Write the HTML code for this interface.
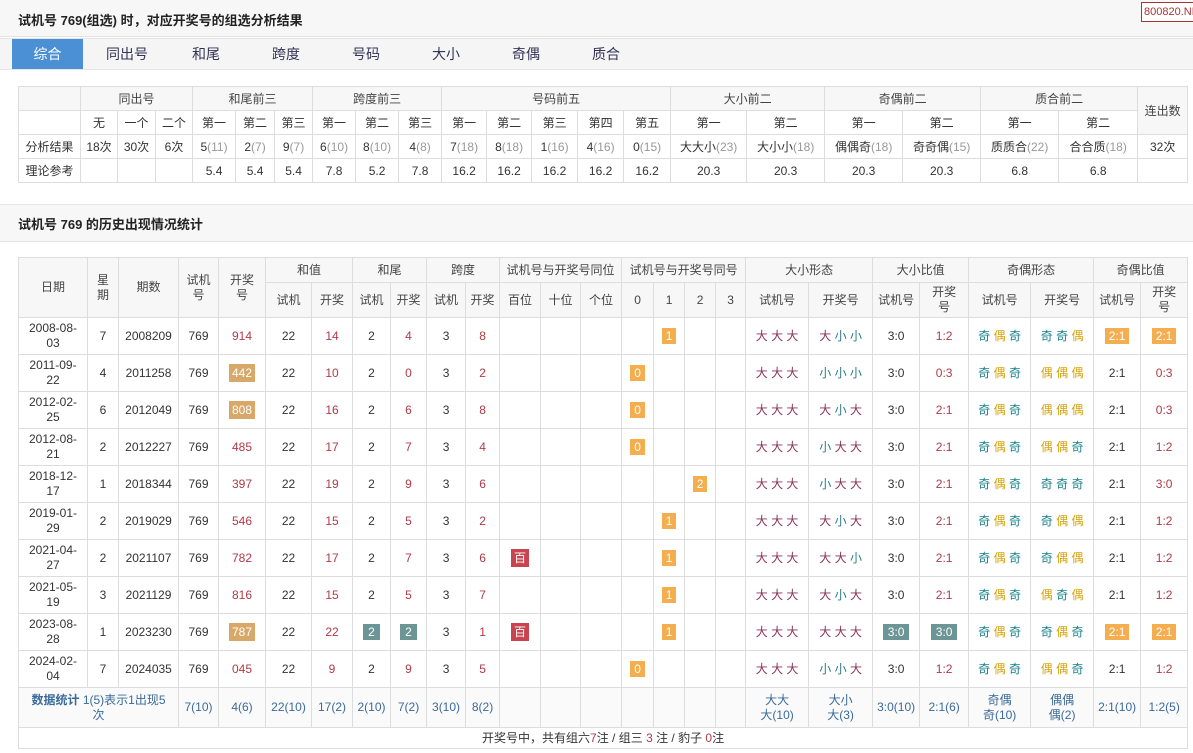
<!DOCTYPE html><html><head><meta charset="utf-8"><style>
body{margin:0;background:#fff;font-family:"Liberation Sans","Noto Sans CJK SC",sans-serif;font-size:12px;color:#333;width:1193px;height:753px;overflow:hidden;position:relative}
.bar{position:absolute;left:0;width:1193px;background:#f7f7f7;border-bottom:1px solid #e3e3e3}
.t{position:absolute;left:18px;font-weight:bold;font-size:13px;color:#222}
.logo{position:absolute;left:1141px;top:2px;border:1px solid #a33;color:#a33;font-size:11px;padding:0 2px;background:#fff;height:18px;line-height:18px;white-space:nowrap}
.tabs{position:absolute;top:38px;left:0;width:1193px;height:30px;background:#f5f5f5;border-top:1px solid #e5e5e5;border-bottom:1px solid #e5e5e5}
.tab{position:absolute;top:0;height:30px;line-height:30px;font-size:14px;color:#335;text-align:center;width:70px}
.tab.a{background:#4b8fd5;color:#fff;left:12px;width:71px}
table{border-collapse:collapse;table-layout:fixed;position:absolute;left:18px}
td{border:1px solid #ddd;text-align:center;padding:0;overflow:hidden;white-space:nowrap}
.h td{background:#f7f7f7;color:#444}
.g{color:#999}
.r{color:#b03a48}
.d{color:#8b3358}.x{color:#2c7b88}.j{color:#16808a}.o{color:#d6a30e}
.b{display:inline-block;background:#f4ad4f;color:#fff;padding:0 4px;line-height:16px}
.tan{display:inline-block;background:#d8a868;color:#fff;padding:0 3px;line-height:18px}
.tl{display:inline-block;background:#6c9696;color:#fff;padding:0 5px;line-height:16px}
.rb{display:inline-block;background:#c8454f;color:#fff;padding:0 3px;line-height:18px}
#t2 td{white-space:normal;line-height:15px}
.st td{color:#3a6a9a}
</style></head><body>
<div class="bar" style="top:0;height:36px"></div>
<div class="t" style="top:10px">试机号 769(组选) 时，对应开奖号的组选分析结果</div>
<div class="logo">800820.NET</div>
<div class="tabs">
<div class="tab a">综合</div><div class="tab" style="left:92px">同出号</div><div class="tab" style="left:171px">和尾</div><div class="tab" style="left:251px">跨度</div><div class="tab" style="left:331px">号码</div><div class="tab" style="left:411px">大小</div><div class="tab" style="left:491px">奇偶</div><div class="tab" style="left:571px">质合</div>
</div>
<table style="top:86px;width:1169px">
<colgroup><col style="width:62px"><col style="width:37px"><col style="width:38px"><col style="width:37px"><col style="width:43px"><col style="width:39px"><col style="width:38px"><col style="width:43px"><col style="width:43px"><col style="width:43px"><col style="width:45px"><col style="width:45px"><col style="width:46px"><col style="width:46px"><col style="width:47px"><col style="width:76px"><col style="width:78px"><col style="width:78px"><col style="width:78px"><col style="width:78px"><col style="width:79px"><col style="width:50px"></colgroup>
<tr class="h" style="height:24px"><td></td><td colspan="3">同出号</td><td colspan="3">和尾前三</td><td colspan="3">跨度前三</td><td colspan="5">号码前五</td><td colspan="2">大小前二</td><td colspan="2">奇偶前二</td><td colspan="2">质合前二</td><td rowspan="2">连出数</td></tr>
<tr style="height:24px"><td></td><td>无</td><td>一个</td><td>二个</td><td>第一</td><td>第二</td><td>第三</td><td>第一</td><td>第二</td><td>第三</td><td>第一</td><td>第二</td><td>第三</td><td>第四</td><td>第五</td><td>第一</td><td>第二</td><td>第一</td><td>第二</td><td>第一</td><td>第二</td></tr>
<tr style="height:24px"><td>分析结果</td><td>18次</td><td>30次</td><td>6次</td><td>5<span class="g">(11)</span></td><td>2<span class="g">(7)</span></td><td>9<span class="g">(7)</span></td><td>6<span class="g">(10)</span></td><td>8<span class="g">(10)</span></td><td>4<span class="g">(8)</span></td><td>7<span class="g">(18)</span></td><td>8<span class="g">(18)</span></td><td>1<span class="g">(16)</span></td><td>4<span class="g">(16)</span></td><td>0<span class="g">(15)</span></td><td>大大小<span class="g">(23)</span></td><td>大小小<span class="g">(18)</span></td><td>偶偶奇<span class="g">(18)</span></td><td>奇奇偶<span class="g">(15)</span></td><td>质质合<span class="g">(22)</span></td><td>合合质<span class="g">(18)</span></td><td>32次</td></tr>
<tr style="height:24px"><td>理论参考</td><td></td><td></td><td></td><td>5.4</td><td>5.4</td><td>5.4</td><td>7.8</td><td>5.2</td><td>7.8</td><td>16.2</td><td>16.2</td><td>16.2</td><td>16.2</td><td>16.2</td><td>20.3</td><td>20.3</td><td>20.3</td><td>20.3</td><td>6.8</td><td>6.8</td><td></td></tr>
</table>
<div class="bar" style="top:204px;height:36px;border-top:1px solid #e3e3e3"></div>
<div class="t" style="top:214px">试机号 769 的历史出现情况统计</div>
<table id="t2" style="top:257px;width:1169px">
<colgroup><col style="width:69px"><col style="width:31px"><col style="width:60px"><col style="width:40px"><col style="width:47px"><col style="width:46px"><col style="width:41px"><col style="width:38px"><col style="width:36px"><col style="width:39px"><col style="width:34px"><col style="width:41px"><col style="width:40px"><col style="width:41px"><col style="width:32px"><col style="width:31px"><col style="width:31px"><col style="width:30px"><col style="width:63px"><col style="width:64px"><col style="width:47px"><col style="width:49px"><col style="width:62px"><col style="width:63px"><col style="width:47px"><col style="width:47px"></colgroup>
<tr class="h" style="height:25px"><td rowspan="2">日期</td><td rowspan="2">星<br>期</td><td rowspan="2">期数</td><td rowspan="2">试机<br>号</td><td rowspan="2">开奖<br>号</td><td colspan="2">和值</td><td colspan="2">和尾</td><td colspan="2">跨度</td><td colspan="3">试机号与开奖号同位</td><td colspan="4">试机号与开奖号同号</td><td colspan="2">大小形态</td><td colspan="2">大小比值</td><td colspan="2">奇偶形态</td><td colspan="2">奇偶比值</td></tr>
<tr class="h" style="height:35px"><td>试机</td><td>开奖</td><td>试机</td><td>开奖</td><td>试机</td><td>开奖</td><td>百位</td><td>十位</td><td>个位</td><td>0</td><td>1</td><td>2</td><td>3</td><td>试机号</td><td>开奖号</td><td>试机号</td><td>开奖<br>号</td><td>试机号</td><td>开奖号</td><td>试机号</td><td>开奖<br>号</td></tr>
<tr style="height:37px"><td>2008-08-<br>03</td><td>7</td><td>2008209</td><td>769</td><td class="r">914</td><td>22</td><td class="r">14</td><td>2</td><td class="r">4</td><td>3</td><td class="r">8</td><td></td><td></td><td></td><td></td><td><span class="b">1</span></td><td></td><td></td><td class="d">大 大 大</td><td><span class="d">大</span> <span class="x">小 小</span></td><td>3:0</td><td class="r">1:2</td><td><span class="j">奇</span> <span class="o">偶</span> <span class="j">奇</span></td><td><span class="j">奇 奇</span> <span class="o">偶</span></td><td><span class="b">2:1</span></td><td><span class="b">2:1</span></td></tr>
<tr style="height:37px"><td>2011-09-<br>22</td><td>4</td><td>2011258</td><td>769</td><td><span class="tan">442</span></td><td>22</td><td class="r">10</td><td>2</td><td class="r">0</td><td>3</td><td class="r">2</td><td></td><td></td><td></td><td><span class="b">0</span></td><td></td><td></td><td></td><td class="d">大 大 大</td><td class="x">小 小 小</td><td>3:0</td><td class="r">0:3</td><td><span class="j">奇</span> <span class="o">偶</span> <span class="j">奇</span></td><td class="o">偶 偶 偶</td><td>2:1</td><td class="r">0:3</td></tr>
<tr style="height:37px"><td>2012-02-<br>25</td><td>6</td><td>2012049</td><td>769</td><td><span class="tan">808</span></td><td>22</td><td class="r">16</td><td>2</td><td class="r">6</td><td>3</td><td class="r">8</td><td></td><td></td><td></td><td><span class="b">0</span></td><td></td><td></td><td></td><td class="d">大 大 大</td><td><span class="d">大</span> <span class="x">小</span> <span class="d">大</span></td><td>3:0</td><td class="r">2:1</td><td><span class="j">奇</span> <span class="o">偶</span> <span class="j">奇</span></td><td class="o">偶 偶 偶</td><td>2:1</td><td class="r">0:3</td></tr>
<tr style="height:37px"><td>2012-08-<br>21</td><td>2</td><td>2012227</td><td>769</td><td class="r">485</td><td>22</td><td class="r">17</td><td>2</td><td class="r">7</td><td>3</td><td class="r">4</td><td></td><td></td><td></td><td><span class="b">0</span></td><td></td><td></td><td></td><td class="d">大 大 大</td><td><span class="x">小</span> <span class="d">大 大</span></td><td>3:0</td><td class="r">2:1</td><td><span class="j">奇</span> <span class="o">偶</span> <span class="j">奇</span></td><td><span class="o">偶 偶</span> <span class="j">奇</span></td><td>2:1</td><td class="r">1:2</td></tr>
<tr style="height:37px"><td>2018-12-<br>17</td><td>1</td><td>2018344</td><td>769</td><td class="r">397</td><td>22</td><td class="r">19</td><td>2</td><td class="r">9</td><td>3</td><td class="r">6</td><td></td><td></td><td></td><td></td><td></td><td><span class="b">2</span></td><td></td><td class="d">大 大 大</td><td><span class="x">小</span> <span class="d">大 大</span></td><td>3:0</td><td class="r">2:1</td><td><span class="j">奇</span> <span class="o">偶</span> <span class="j">奇</span></td><td class="j">奇 奇 奇</td><td>2:1</td><td class="r">3:0</td></tr>
<tr style="height:37px"><td>2019-01-<br>29</td><td>2</td><td>2019029</td><td>769</td><td class="r">546</td><td>22</td><td class="r">15</td><td>2</td><td class="r">5</td><td>3</td><td class="r">2</td><td></td><td></td><td></td><td></td><td><span class="b">1</span></td><td></td><td></td><td class="d">大 大 大</td><td><span class="d">大</span> <span class="x">小</span> <span class="d">大</span></td><td>3:0</td><td class="r">2:1</td><td><span class="j">奇</span> <span class="o">偶</span> <span class="j">奇</span></td><td><span class="j">奇</span> <span class="o">偶 偶</span></td><td>2:1</td><td class="r">1:2</td></tr>
<tr style="height:37px"><td>2021-04-<br>27</td><td>2</td><td>2021107</td><td>769</td><td class="r">782</td><td>22</td><td class="r">17</td><td>2</td><td class="r">7</td><td>3</td><td class="r">6</td><td><span class="rb">百</span></td><td></td><td></td><td></td><td><span class="b">1</span></td><td></td><td></td><td class="d">大 大 大</td><td><span class="d">大 大</span> <span class="x">小</span></td><td>3:0</td><td class="r">2:1</td><td><span class="j">奇</span> <span class="o">偶</span> <span class="j">奇</span></td><td><span class="j">奇</span> <span class="o">偶 偶</span></td><td>2:1</td><td class="r">1:2</td></tr>
<tr style="height:37px"><td>2021-05-<br>19</td><td>3</td><td>2021129</td><td>769</td><td class="r">816</td><td>22</td><td class="r">15</td><td>2</td><td class="r">5</td><td>3</td><td class="r">7</td><td></td><td></td><td></td><td></td><td><span class="b">1</span></td><td></td><td></td><td class="d">大 大 大</td><td><span class="d">大</span> <span class="x">小</span> <span class="d">大</span></td><td>3:0</td><td class="r">2:1</td><td><span class="j">奇</span> <span class="o">偶</span> <span class="j">奇</span></td><td><span class="o">偶</span> <span class="j">奇</span> <span class="o">偶</span></td><td>2:1</td><td class="r">1:2</td></tr>
<tr style="height:37px"><td>2023-08-<br>28</td><td>1</td><td>2023230</td><td>769</td><td><span class="tan">787</span></td><td>22</td><td class="r">22</td><td><span class="tl">2</span></td><td><span class="tl">2</span></td><td>3</td><td class="r">1</td><td><span class="rb">百</span></td><td></td><td></td><td></td><td><span class="b">1</span></td><td></td><td></td><td class="d">大 大 大</td><td class="d">大 大 大</td><td><span class="tl">3:0</span></td><td><span class="tl">3:0</span></td><td><span class="j">奇</span> <span class="o">偶</span> <span class="j">奇</span></td><td><span class="j">奇</span> <span class="o">偶</span> <span class="j">奇</span></td><td><span class="b">2:1</span></td><td><span class="b">2:1</span></td></tr>
<tr style="height:37px"><td>2024-02-<br>04</td><td>7</td><td>2024035</td><td>769</td><td class="r">045</td><td>22</td><td class="r">9</td><td>2</td><td class="r">9</td><td>3</td><td class="r">5</td><td></td><td></td><td></td><td><span class="b">0</span></td><td></td><td></td><td></td><td class="d">大 大 大</td><td><span class="x">小 小</span> <span class="d">大</span></td><td>3:0</td><td class="r">1:2</td><td><span class="j">奇</span> <span class="o">偶</span> <span class="j">奇</span></td><td><span class="o">偶 偶</span> <span class="j">奇</span></td><td>2:1</td><td class="r">1:2</td></tr>
<tr class="st" style="height:40px;background:#fafafa"><td colspan="3"><div style="width:140px;margin:0 auto;text-align:center"><b>数据统计</b> 1(5)表示1出现5次</div></td><td>7(10)</td><td>4(6)</td><td>22(10)</td><td>17(2)</td><td>2(10)</td><td>7(2)</td><td>3(10)</td><td>8(2)</td><td></td><td></td><td></td><td></td><td></td><td></td><td></td><td>大大<br>大(10)</td><td>大小<br>大(3)</td><td>3:0(10)</td><td>2:1(6)</td><td>奇偶<br>奇(10)</td><td>偶偶<br>偶(2)</td><td>2:1(10)</td><td>1:2(5)</td></tr>
<tr style="height:21px"><td colspan="26">开奖号中，共有组六<span class="r">7</span>注 / 组三 <span class="r">3</span> 注 / 豹子 <span class="r">0</span>注</td></tr>
</table>
</body></html>
